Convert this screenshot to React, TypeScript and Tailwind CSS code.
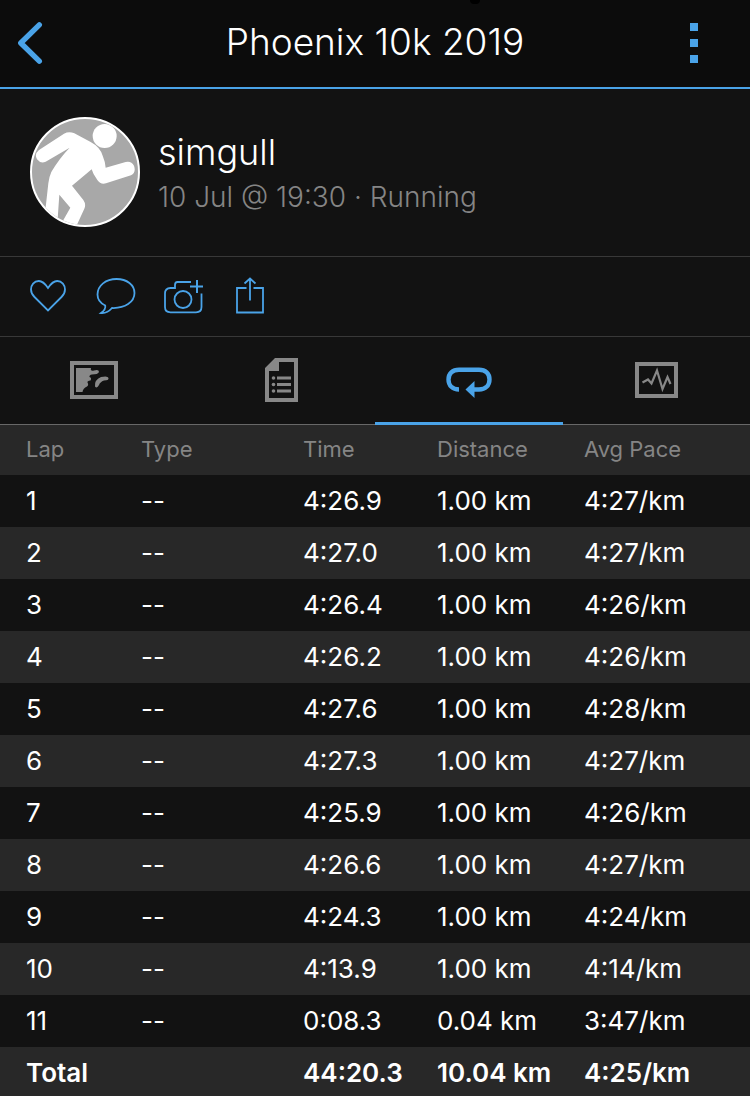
import { useState } from "react";
import type { ReactNode } from "react";
import clsx from "clsx";

interface Lap {
  lap: number;
  time: string;
  distance: string;
  pace: string;
}

const LAPS: Lap[] = [
  { lap: 1, time: "4:26.9", distance: "1.00 km", pace: "4:27/km" },
  { lap: 2, time: "4:27.0", distance: "1.00 km", pace: "4:27/km" },
  { lap: 3, time: "4:26.4", distance: "1.00 km", pace: "4:26/km" },
  { lap: 4, time: "4:26.2", distance: "1.00 km", pace: "4:26/km" },
  { lap: 5, time: "4:27.6", distance: "1.00 km", pace: "4:28/km" },
  { lap: 6, time: "4:27.3", distance: "1.00 km", pace: "4:27/km" },
  { lap: 7, time: "4:25.9", distance: "1.00 km", pace: "4:26/km" },
  { lap: 8, time: "4:26.6", distance: "1.00 km", pace: "4:27/km" },
  { lap: 9, time: "4:24.3", distance: "1.00 km", pace: "4:24/km" },
  { lap: 10, time: "4:13.9", distance: "1.00 km", pace: "4:14/km" },
  { lap: 11, time: "0:08.3", distance: "0.04 km", pace: "3:47/km" },
];

function BackIcon() {
  return (
    <svg width="28" height="44" viewBox="0 0 28 44" fill="none" stroke="currentColor" strokeWidth="5.4">
      <path d="M23.300 3.800 4.800 22 23.300 40.200" strokeLinecap="round" strokeLinejoin="round" />
    </svg>
  );
}

function MoreIcon() {
  return (
    <svg width="8" height="40" viewBox="0 0 8 40" fill="currentColor">
      <path d="M0 0h8v8H0zM0 16h8v8H0zM0 32h8v8H0z" />
    </svg>
  );
}

function RunnerAvatar() {
  return (
    <svg className="size-full" viewBox="36 42 318 318" fill="#fff">
      <circle cx="254" cy="93" r="36" />
      <path d="M132 86Q147 78 163 85L212 111Q240 126 248 152Q256 171 257 188L317 171Q334 167 342 182Q349 202 333 211L258 235Q241 239 232 225Q219 208 215 193L156 242L190 285Q199 298 193 311L166 370H116L151 308L118 269L111 370H70L85 235Q87 216 94 201Q117 161 149 128L77 170Q62 177 51 163Q42 147 57 135Z" />
    </svg>
  );
}

function HeartIcon() {
  return (
    <svg width="38" height="34" viewBox="0 0 38 34" fill="none" stroke="currentColor" strokeWidth="1.8">
      <path d="M18 9C15 4.500 12 2 8.800 2C4 2 1 6 1 10.500C1 13.500 2.500 16 4.500 18L18 31.500L31.500 18C33.500 16 35 13.500 35 10.500C35 6 32 2 27.200 2C24 2 21 4.500 18 9Z" />
    </svg>
  );
}

function CommentIcon() {
  return (
    <svg width="40" height="38" viewBox="0 0 40 38" fill="none" stroke="currentColor" strokeWidth="1.800">
      <path d="M20.500 2C31 2 38.500 8 38.500 16C38.500 25 29 31.500 16 31C13 34.500 9.500 36.500 5 36C8.500 33.500 9.800 31 9.200 28.500C4 26 1.500 22 1.500 17.500C1.500 8.500 10 2 20.500 2Z" />
    </svg>
  );
}

function CameraIcon() {
  return (
    <svg width="40" height="36" viewBox="0 0 40 36" fill="none" stroke="currentColor" strokeWidth="1.800">
      <path d="M28 4H14.500Q12 4 12 7V10H7.500Q2 10 2 15.500V29Q2 34.300 7.500 34.300H33Q38.500 34.300 38.500 29V15.500" />
      <circle cx="20" cy="21.500" r="8.500" />
      <path d="M27 8.500H40M34 2V15" strokeWidth="2" />
    </svg>
  );
}

function ShareIcon() {
  return (
    <svg width="28" height="38" viewBox="0 0 28 38" fill="none" stroke="currentColor" strokeWidth="1.800">
      <path d="M10.500 11H1V35.500H27V11H17.500M14 1.500V23.500M8.500 6.500 14 1.500 19.500 6.500" />
    </svg>
  );
}

function MapIcon() {
  return (
    <svg width="48" height="38" viewBox="0 0 48 38">
      <path d="M2 2H46V36H2Z" fill="none" stroke="currentColor" strokeWidth="4" />
      <path
        d="M6 7H21Q20 10.500 24 9.500Q29 8 29 11Q28 13.500 22 13.500Q19 14 19.500 16Q22 17 20.500 19.500Q17 20 17.500 21.500Q19 24 17 25.500Q13 27 12.500 31H6ZM31 16Q38 14.500 38.500 17Q39 19.500 34 19.500Q30 21 29 24Q27 28 25 25.500Q24 19 31 16Z"
        fill="currentColor"
      />
    </svg>
  );
}

function DetailsIcon() {
  return (
    <svg width="33" height="45" viewBox="0 0 33 45" fill="currentColor">
      <path fillRule="evenodd" d="M10 1H33V45H0V11ZM14 5V14H4V41H29V5Z" />
      <path d="M12 19.500H26V22.500H12ZM12 26H26V29H12ZM12 32.500H26V35.500H12Z" />
      <circle cx="8.500" cy="21" r="1.800" />
      <circle cx="8.500" cy="27.500" r="1.800" />
      <circle cx="8.500" cy="34" r="1.800" />
    </svg>
  );
}

function LapsIcon() {
  return (
    <svg width="46" height="38" viewBox="0 -6 46 38">
      <path
        d="M13 22.500C6.500 22.500 2.500 18.500 2.500 12.500C2.500 6.500 6.500 2.800 13 2.800H33C39.500 2.800 43.500 6.500 43.500 12.500C43.500 18.500 39.500 22.500 33 22.500H27"
        fill="none"
        stroke="currentColor"
        strokeWidth="4.400"
      />
      <path d="M19.500 22.500 28.500 14V31Z" fill="currentColor" />
    </svg>
  );
}

function ChartIcon() {
  return (
    <svg width="43" height="36" viewBox="0 0 43 36" fill="none" stroke="currentColor">
      <path d="M2 2H41V34H2Z" strokeWidth="4" />
      <path d="M7.500 20.500 13 17.500 16.500 21.500 22 8.500 27.500 27 32.500 15 35.500 22" strokeWidth="2.200" />
    </svg>
  );
}

const ACTIONS: { label: string; icon: ReactNode }[] = [
  { label: "Like", icon: <HeartIcon /> },
  { label: "Comment", icon: <CommentIcon /> },
  { label: "Add photo", icon: <CameraIcon /> },
  { label: "Share", icon: <ShareIcon /> },
];

const TABS: { id: string; label: string; icon: ReactNode }[] = [
  { id: "map", label: "Map", icon: <MapIcon /> },
  { id: "details", label: "Details", icon: <DetailsIcon /> },
  { id: "laps", label: "Laps", icon: <LapsIcon /> },
  { id: "charts", label: "Charts", icon: <ChartIcon /> },
];

function LapTable() {
  return (
    <table className="w-full table-fixed border-collapse text-left text-[26px] leading-8 whitespace-nowrap">
      <colgroup>
        <col className="w-[115px]" />
        <col className="w-[162px]" />
        <col className="w-[134px]" />
        <col className="w-[147px]" />
        <col className="w-[192px]" />
      </colgroup>
      <thead>
        <tr className="h-[50px] bg-[#282828] text-[22px] text-[#858585]">
          {["Lap", "Type", "Time", "Distance", "Avg Pace"].map((name) => (
            <th key={name} scope="col" className="p-0 pb-0.5 pl-[26px] font-normal">
              {name}
            </th>
          ))}
        </tr>
      </thead>
      <tbody>
        {LAPS.map((row) => (
          <tr key={row.lap} className="h-[52px] bg-[#121212] even:bg-[#282828]">
            <td className="p-0 pl-[26px]">{row.lap}</td>
            <td className="p-0 pl-[26px]">--</td>
            <td className="p-0 pl-[26px]">{row.time}</td>
            <td className="p-0 pl-[26px]">{row.distance}</td>
            <td className="p-0 pl-[26px]">{row.pace}</td>
          </tr>
        ))}
      </tbody>
      <tfoot>
        <tr className="h-[52px] bg-[#282828] font-semibold">
          <th scope="row" colSpan={2} className="p-0 pl-[26px] font-semibold">
            Total
          </th>
          <td className="p-0 pl-[26px]">44:20.3</td>
          <td className="p-0 pl-[26px]">10.04 km</td>
          <td className="p-0 pl-[26px]">4:25/km</td>
        </tr>
      </tfoot>
    </table>
  );
}

export default function App() {
  const [activeTab, setActiveTab] = useState("laps");

  return (
    <div className="flex h-screen flex-col bg-[#121212] font-['Inter',sans-serif] text-white">
      <header className="relative flex h-[89px] shrink-0 items-center justify-between border-b-2 border-[#4aa3e8] bg-[#0c0c0c] px-4 pb-0.5 text-[#4aa3e8]">
        <span className="absolute top-0 left-[470px] h-1 w-2.5 rounded-b-full bg-black" />
        <button type="button" aria-label="Back" className="flex w-16">
          <BackIcon />
        </button>
        <h1 className="pb-0.5 text-[37px] leading-10 font-light text-white">Phoenix 10k 2019</h1>
        <button type="button" aria-label="More options" className="flex w-16 justify-center pr-4">
          <MoreIcon />
        </button>
      </header>

      <section className="flex h-[168px] shrink-0 items-center gap-[18px] border-b border-[#383838] px-[30px] pb-0.5">
        <div className="size-[110px] shrink-0 overflow-hidden rounded-full border-2 border-white bg-[#a8a8a8]">
          <RunnerAvatar />
        </div>
        <div className="pt-1">
          <p className="text-4xl leading-[46px] font-light">simgull</p>
          <p className="text-[28px] leading-[44px] font-light text-[#858585]">10 Jul @ 19:30 · Running</p>
        </div>
      </section>

      <section className="flex h-20 shrink-0 items-center gap-[27px] border-b border-[#383838] px-[29px] pb-0.5 text-[#4aa3e8]">
        {ACTIONS.map((action) => (
          <button key={action.label} type="button" aria-label={action.label} className="flex w-10 justify-center">
            {action.icon}
          </button>
        ))}
      </section>

      <nav className="grid h-[88px] shrink-0 grid-cols-4 border-b border-[#686868]">
        {TABS.map((tab) => (
          <button
            key={tab.id}
            type="button"
            aria-label={tab.label}
            onClick={() => setActiveTab(tab.id)}
            className={clsx(
              "-mb-px flex items-center justify-center border-b-[3px]",
              activeTab === tab.id ? "border-[#4aa3e8] text-[#4aa3e8]" : "border-transparent text-[#888]"
            )}
          >
            {tab.icon}
          </button>
        ))}
      </nav>

      <main className="min-h-0 flex-1 overflow-y-auto [scrollbar-width:none]">
        <LapTable />
      </main>
    </div>
  );
}
